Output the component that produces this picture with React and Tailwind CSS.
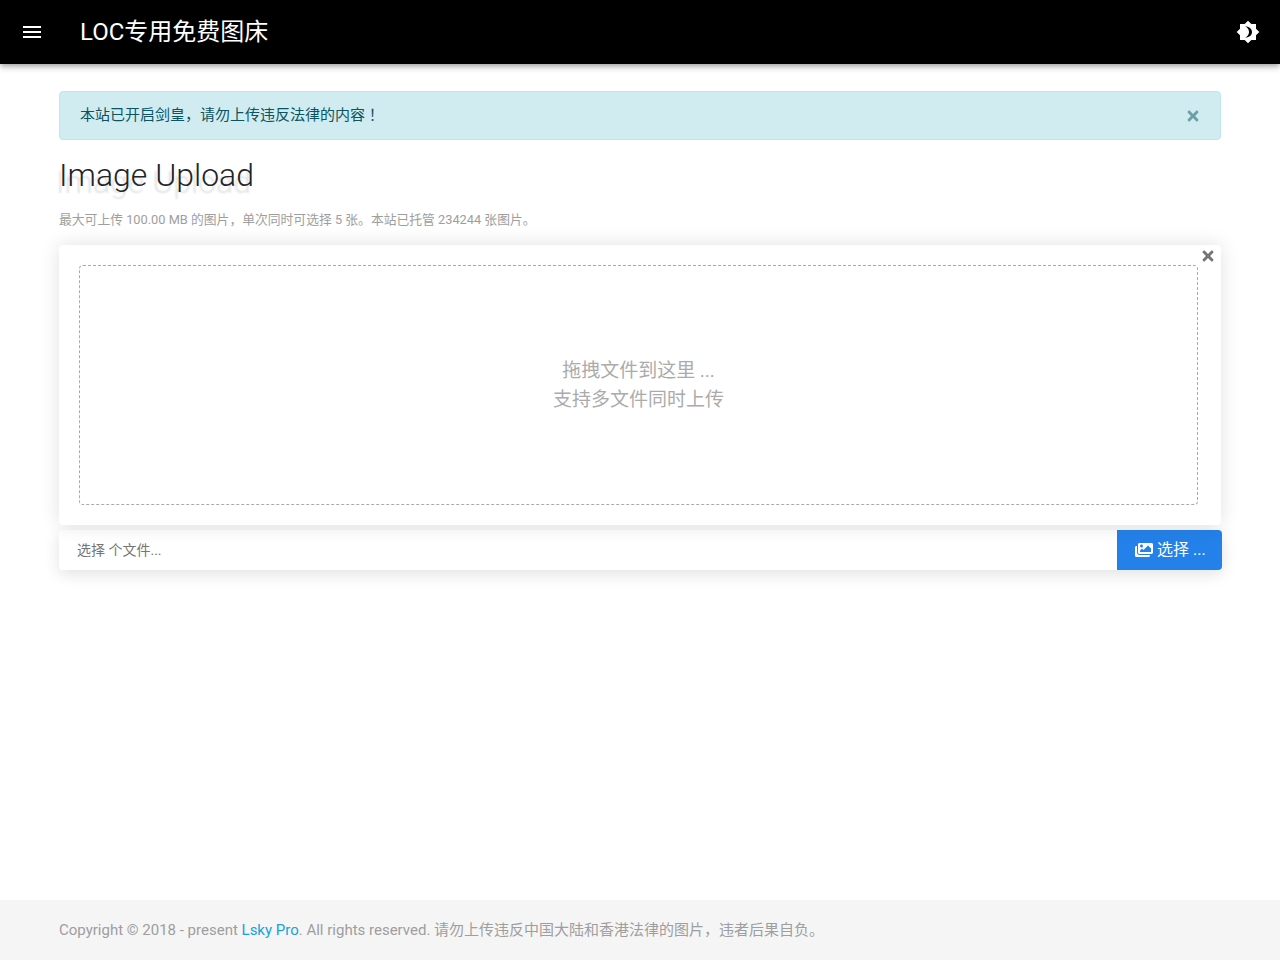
import React from "react";
import { FaImages, FaTimes } from "react-icons/fa";

export default function App() {
    return (
        <div className="min-h-screen flex flex-col bg-white font-['Roboto','Noto_Sans_CJK_SC',sans-serif] [text-spacing-trim:space-all]">
            <header className="h-16 shrink-0 bg-black flex items-center justify-between text-white shadow-[0_2px_4px_-1px_rgba(0,0,0,0.2),0_4px_5px_0_rgba(0,0,0,0.14),0_1px_10px_0_rgba(0,0,0,0.12)]">
                <div className="flex items-center">
                    <div className="w-16 h-16 flex items-center justify-center">
                        <svg className="w-6 h-6" viewBox="0 0 24 24" fill="currentColor"><path d="M3,6H21V8H3V6M3,11H21V13H3V11M3,16H21V18H3V16Z" /></svg>
                    </div>
                    <div className="ml-4 text-[24px] leading-8">LOC专用免费图床</div>
                </div>
                <div className="w-16 h-16 flex items-center justify-center">
                    <svg className="w-6 h-6" viewBox="0 0 24 24" fill="currentColor" fillRule="evenodd"><path d="M20,8.69V4H15.31L12,0.69L8.69,4H4V8.69L0.69,12L4,15.31V20H8.69L12,23.31L15.31,20H20V15.31L23.31,12L20,8.69ZM9.5,6.5C13.5,6.5 16,9 16,12C16,15 13.5,17.5 9.5,17.5C11.56,16.5 13,14.42 13,12C13,9.58 11.56,7.5 9.5,6.5Z" /></svg>
                </div>
            </header>

            <main className="flex-1 pt-[27px] pl-[59px] pr-[59px]">
                <div className="h-[49px] flex items-center justify-between pl-5 pr-[19px] bg-[#d1ecf1] border border-[#bee5eb] rounded text-[#0c5460] text-[15px] font-['Roboto','Noto_Sans_CJK_KR',sans-serif]">
                    <span>本站已开启剑皇，请勿上传违反法律的内容！</span>
                    <FaTimes className="text-[16px] text-[#0c5460] opacity-50" />
                </div>

                <h1 className="mt-4 text-[32px] leading-[38px] font-light text-[#212529] [text-shadow:-3px_7px_2px_rgba(0,0,0,0.12)]">Image Upload</h1>
                <p className="mt-4 text-[12.8px] leading-[19px] text-[#9e9e9e]">最大可上传 100.00 MB 的图片，单次同时可选择 5 张。本站已托管 234244 张图片。</p>

                <div className="relative mt-4 h-[280px] pt-5 pl-5 pr-[23px] bg-white rounded shadow-[0_0_20px_rgba(0,0,0,0.12)]">
                    <FaTimes className="absolute top-[3px] right-[5px] text-[16px] text-[#757575]" />
                    <div className="h-60 flex flex-col items-center justify-center border border-dashed border-[#aaaaaa] rounded-sm text-[19px] leading-[29px] text-[#ababab]">
                        <div>拖拽文件到这里 ...</div>
                        <div>支持多文件同时上传</div>
                    </div>
                </div>

                <div className="flex mt-[5px] mr-[-1px] h-10 rounded shadow-[0_4px_16px_rgba(0,0,0,0.12)]">
                    <div className="flex-1 flex items-center pl-[18px] bg-white rounded-l text-[14px] text-[#757575]">选择 个文件...</div>
                    <div className="w-[105px] flex items-center pl-[18px] gap-1 bg-[#2481e9] rounded-r text-white text-[16px]">
                        <FaImages className="text-[18px]" />
                        <span>选择 ...</span>
                    </div>
                </div>
            </main>

            <footer className="h-[60px] shrink-0 flex items-center pl-[59px] bg-[#f5f5f5] text-[15px] text-[#9e9e9e]">
                <span>Copyright © 2018 - present <span className="text-[#17a2d8]">Lsky Pro</span>. All rights reserved. 请勿上传违反中国大陆和香港法律的图片，违者后果自负。</span>
            </footer>
        </div>
    );
}
